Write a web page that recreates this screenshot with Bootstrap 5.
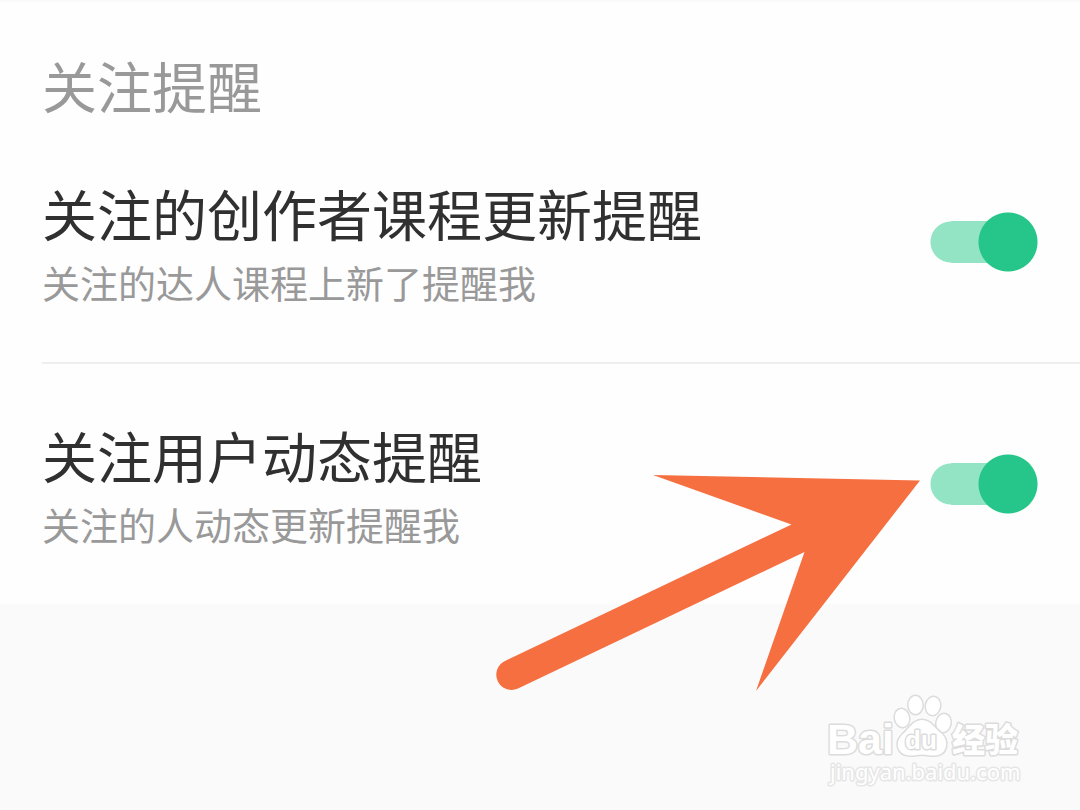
<!DOCTYPE html>
<html lang="zh-CN">
<head>
<meta charset="utf-8">
<meta name="viewport" content="width=device-width, initial-scale=1">
<title>关注提醒</title>
<link href="https://cdn.jsdelivr.net/npm/bootstrap@5.3.0/dist/css/bootstrap.min.css" rel="stylesheet">
<style>
body { background: #fafafa; font-family: "Noto Sans CJK SC", sans-serif; }
.settings { background: #fefefe; border-top: 2px solid #fafafa; padding-left: 42px; }
.group-title { font-size: 55px; line-height: 72px; color: #999; padding: 46px 0 2px; }
.setting { padding: 50px 42px 50px 0; }
.setting + .setting { border-top: 2px solid #eee; }
.setting-name { font-size: 55px; line-height: 80px; color: #303030; }
.setting-note { font-size: 38px; line-height: 60px; color: #999; }
.toggle { appearance: none; width: 108px; height: 60px; cursor: pointer; background:
  radial-gradient(circle at 78px 30px, #26c68a 29px, transparent 30px),
  radial-gradient(circle at 21px 30px, #93e4c5 20px, transparent 21px),
  linear-gradient(#93e4c5, #93e4c5) 21px 9px / 57px 42px no-repeat; }
.pointer { top: 474px; right: 160px; pointer-events: none; }
.brand-mark { right: 54px; bottom: 20px; }
</style>
</head>
<body>
<main class="position-relative min-vh-100">
  <section class="settings">
    <h1 class="group-title fw-normal m-0">关注提醒</h1>
    <div class="setting d-flex align-items-center justify-content-between">
      <label for="course">
        <span class="setting-name d-block">关注的创作者课程更新提醒</span>
        <span class="setting-note d-block">关注的达人课程上新了提醒我</span>
      </label>
      <input class="toggle flex-shrink-0 m-0" type="checkbox" role="switch" id="course" checked>
    </div>
    <div class="setting d-flex align-items-center justify-content-between">
      <label for="activity">
        <span class="setting-name d-block">关注用户动态提醒</span>
        <span class="setting-note d-block">关注的人动态更新提醒我</span>
      </label>
      <input class="toggle flex-shrink-0 m-0" type="checkbox" role="switch" id="activity" checked>
    </div>
  </section>

  <svg class="pointer position-absolute" width="424" height="218" viewBox="496 474 424 218" aria-hidden="true">
    <path fill="#f66f40" d="M653 475 L920 480.500 L756 691 L804.500 552 L518 688.500 A15 15 0 0 1 505 661 L791.500 524.500 Z"/>
  </svg>

  <svg class="brand-mark position-absolute" width="202" height="100" viewBox="824 690 202 100" role="img" aria-label="Baidu经验 jingyan.baidu.com">
    <g fill="#fff" stroke="#dcdcdc" stroke-width="3" stroke-linejoin="round" paint-order="stroke">
      <text x="827" y="754" font-family="Liberation Sans, sans-serif" font-weight="700" font-size="43">Bai</text>
      <ellipse cx="902" cy="718" rx="7" ry="9" transform="rotate(-12 902 718)"/>
      <ellipse cx="915.500" cy="705" rx="7" ry="9"/>
      <ellipse cx="933" cy="706" rx="7" ry="9" transform="rotate(10 933 706)"/>
      <ellipse cx="943.500" cy="723" rx="7" ry="9" transform="rotate(12 943.500 723)"/>
      <path d="M922 720 C931 720 935 729 941 733 C950 741 947 755 935 755.500 C930 756 927 754.500 922 754.500 C917 754.500 915 756 910 755.500 C897 755 894 742 903 734 C909 729 913 720 922 720 Z"/>
      <text x="905" y="749" font-family="Liberation Sans, sans-serif" font-weight="700" font-size="26">du</text>
      <text x="952" y="752" font-family="Noto Sans CJK SC, sans-serif" font-weight="900" font-size="33">经验</text>
      <text x="830" y="780" font-family="Noto Sans, sans-serif" font-size="22" stroke="#e6e6e6">jingyan.baidu.com</text>
    </g>
  </svg>
</main>
<script src="https://cdn.jsdelivr.net/npm/bootstrap@5.3.0/dist/js/bootstrap.bundle.min.js"></script>
</body>
</html>
